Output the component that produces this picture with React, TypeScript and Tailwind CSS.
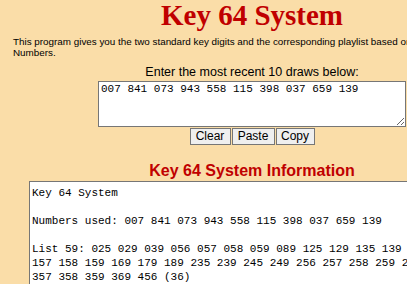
import React from "react";

export default function App() {
  const btn =
    "h-[17px] bg-[#efefef] border border-[#767676] text-black text-[12px] leading-[15px] px-0 flex items-center justify-center";
  return (
    <div className="w-screen h-screen overflow-hidden bg-[#FADDA8]">
      <div className="w-[504px] text-black" style={{ fontFamily: '"Liberation Sans", Arial, sans-serif' }}>
        <h1
          className="text-center text-[29px] leading-[30px] font-bold text-[#C00000]"
          style={{ fontFamily: '"Liberation Serif", "Times New Roman", serif' }}
        >
          Key 64 System
        </h1>
        <p className="mt-[6px] pl-[13px] text-[9.85px] leading-[11px] whitespace-nowrap">
          This program gives you the two standard key digits and the corresponding playlist based on the most recent Pick 3 Winning
          <br />
          Numbers.
        </p>
        <div className="mt-[7px] text-center text-[12.5px] leading-[15px]">
          Enter the most recent 10 draws below:
        </div>
        <textarea
          className="mt-[1px] block mx-auto w-[308px] h-[46px] border border-[#767676] bg-white px-[2px] pt-[1px] text-[11px] leading-[13.6px] text-black outline-none"
          style={{ fontFamily: '"Liberation Mono", "DejaVu Sans Mono", monospace' }}
          defaultValue="007 841 073 943 558 115 398 037 659 139"
        />
        <div className="mt-[1px] flex justify-center gap-[1px]">
          <button className={btn + " w-[41px]"}>Clear</button>
          <button className={btn + " w-[43px]"}>Paste</button>
          <button className={btn + " w-[39px]"}>Copy</button>
        </div>
        <h2 className="mt-[17px] text-center text-[16px] leading-[18px] font-bold text-[#C00000]">
          Key 64 System Information
        </h2>
        <div
          className="mt-[1px] ml-[29px] w-[446px] h-[160px] border border-[#767676] bg-white px-[2px] pt-[4px] text-[11px] leading-[14px] whitespace-pre overflow-hidden"
          style={{ fontFamily: '"Liberation Mono", "DejaVu Sans Mono", monospace' }}
        >
          {"Key 64 System\n\nNumbers used: 007 841 073 943 558 115 398 037 659 139\n\nList 59: 025 029 039 056 057 058 059 089 125 129 135 139 145 149\n157 158 159 169 179 189 235 239 245 249 256 257 258 259 269 279\n357 358 359 369 456 (36)"}
        </div>
      </div>
    </div>
  );
}
